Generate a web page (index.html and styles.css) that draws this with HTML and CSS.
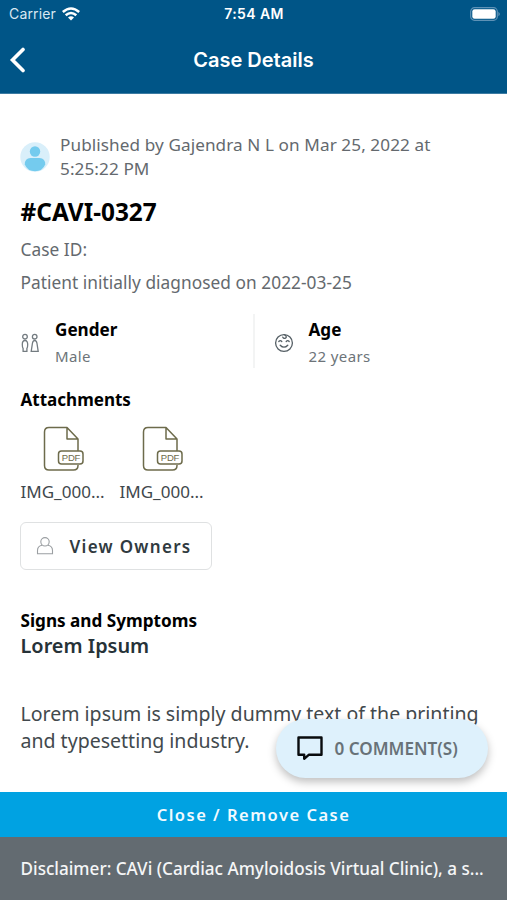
FILE: index.html
```html
<!DOCTYPE html>
<html lang="en">
<head>
<meta charset="utf-8">
<title>Case Details</title>
<link rel="stylesheet" href="styles.css">
</head>
<body>
<div class="screen">
  <header class="header">
    <div class="status">
      <div class="carrier"><span>Carrier</span>
        <svg width="18" height="14" viewBox="0 0 18 14" fill="none" stroke="#fff" stroke-width="2.600"><path d="M.8 5Q9-2 17.200 5M3.700 8.300Q9 3.700 14.300 8.300"/><path d="M9 13.500L6 10.400Q9 8 12 10.400Z" fill="#fff" stroke="none"/></svg>
      </div>
      <div class="time">7:54 AM</div>
      <svg class="battery" width="31" height="14" viewBox="0 0 31 14"><rect x=".7" y=".7" width="26.600" height="12.600" rx="3.800" fill="none" stroke="#5e92b6" stroke-width="1.200"/><rect x="2.300" y="2.300" width="23.400" height="9.400" rx="2.300" fill="#fff"/><path d="M28.500 4.700q2.400 2.300 0 4.600z" fill="#7aa5c4"/></svg>
    </div>
    <div class="nav">
      <svg class="back" width="16" height="26" viewBox="0 0 16 26" fill="none" stroke="#fff" stroke-width="3.600" stroke-linecap="round" stroke-linejoin="miter"><path d="M14 2.500L3.500 13L14 23.500"/></svg>
      <h1 class="title">Case Details</h1>
    </div>
  </header>
  <main class="content">
    <div class="published">
      <svg class="avatar" width="30" height="30" viewBox="0 0 30 30"><circle cx="15" cy="15" r="14.700" fill="#d9effa"/><circle cx="15" cy="9.500" r="5.200" fill="#74cbee"/><path d="M4.800 22.500Q4.800 16 10.500 16H19.500Q25.200 16 25.200 22.500Q22.500 29.300 15 29.300T4.800 22.500Z" fill="#74cbee"/></svg>
      <p class="published-text">Published by Gajendra N L on Mar 25, 2022 at 5:25:22 PM</p>
    </div>
    <h2 class="case-no">#CAVI-0327</h2>
    <p class="meta">Case ID:</p>
    <p class="meta diagnosed">Patient initially diagnosed on 2022-03-25</p>
    <div class="facts">
      <div class="fact">
        <svg width="20" height="20" viewBox="0 0 20 20" fill="none" stroke="#737b80" stroke-width="1.300"><circle cx="4" cy="3.700" r="2.300"/><circle cx="13.700" cy="3.700" r="2.300"/><path d="M4 7.500C2.200 7.500 1.300 9 1.300 11.500C1.300 14 1.700 15 2.100 15.500V18.300H5.900V15.500C6.300 15 6.700 14 6.700 11.500C6.700 9 5.800 7.500 4 7.500ZM13.700 7.500C12.300 7.500 11.700 8.500 11.400 10.500L10.200 18.300H17.200L16 10.500C15.700 8.500 15.100 7.500 13.700 7.500Z"/></svg>
        <div><h3 class="fact-name">Gender</h3><p class="fact-value">Male</p></div>
      </div>
      <div class="fact age">
        <svg width="20" height="20" viewBox="0 0 20 20" fill="none" stroke="#555f65" stroke-width="1.300" stroke-linecap="round"><circle cx="10" cy="10" r="8.400"/><path d="M10.500 1.800Q13.500 3.800 11.500 5.200Q9.500 5.800 8.800 4.200M4.800 8.500Q6.300 6.700 7.800 8.500M12.200 8.500Q13.700 6.700 15.200 8.500M6.200 12.200Q10 16.200 13.800 12.200"/></svg>
        <div><h3 class="fact-name">Age</h3><p class="fact-value">22 years</p></div>
      </div>
    </div>
    <h3 class="section">Attachments</h3>
    <div class="files">
      <div class="file">
        <svg width="42" height="46" viewBox="0 0 42 46" fill="none" stroke="#6d6b4b" stroke-width="1.500" stroke-linejoin="round"><path d="M35 39V39.500Q35 44 30.500 44H6Q1.500 44 1.500 39.500V6Q1.500 1.500 6 1.500H24L35 13V25M24 1.500V13H35"/><rect x="15.500" y="25" width="24.500" height="13" rx="3"/><text class="pdf" x="27.900" y="34.700" text-anchor="middle">PDF</text></svg>
        <p class="file-name">IMG_000...</p>
      </div>
      <div class="file">
        <svg width="42" height="46" viewBox="0 0 42 46" fill="none" stroke="#6d6b4b" stroke-width="1.500" stroke-linejoin="round"><path d="M35 39V39.500Q35 44 30.500 44H6Q1.500 44 1.500 39.500V6Q1.500 1.500 6 1.500H24L35 13V25M24 1.500V13H35"/><rect x="15.500" y="25" width="24.500" height="13" rx="3"/><text class="pdf" x="27.900" y="34.700" text-anchor="middle">PDF</text></svg>
        <p class="file-name">IMG_000...</p>
      </div>
    </div>
    <button class="owners">
      <svg width="18" height="20" viewBox="0 0 18 20" fill="none" stroke="#9b9fa2" stroke-width="1.100"><circle cx="9" cy="5.800" r="4.200"/><path d="M6 9.200Q1.500 10 1.500 14.500V17.700H16.500V14.500Q16.500 10 12 9.200"/></svg>
      <span>View Owners</span>
    </button>
    <h3 class="section signs">Signs and Symptoms</h3>
    <h4 class="subject">Lorem Ipsum</h4>
    <p class="description">Lorem ipsum is simply dummy text of the printing and typesetting industry.</p>
  </main>
  <button class="comments">
    <svg width="26" height="25" viewBox="0 0 26 25" fill="none" stroke="#080b0d" stroke-width="2.400" stroke-linejoin="round"><path d="M1.500 1.500H24.500V18.700H12L7.200 22.800V18.700H1.500Z"/></svg>
    <span>0 COMMENT(S)</span>
  </button>
  <footer class="footer">
    <button class="close">Close / Remove Case</button>
    <p class="disclaimer">Disclaimer: CAVi (Cardiac Amyloidosis Virtual Clinic), a s...</p>
  </footer>
</div>
</body>
</html>
```
FILE: styles.css
```css
* { box-sizing: border-box; }
body, h1, h2, h3, h4, p { margin: 0; }
body { font-family: "Noto Sans", sans-serif; background: #fff; color: #000; }
button { font: inherit; border: 0; padding: 0; }
svg { display: block; flex: none; }
.screen { position: relative; display: flex; flex-direction: column; width: 507px; height: 900px; overflow: hidden; }
.header { height: 94px; flex: none; background: #005587; border-bottom: 1px solid #3c7ba2; color: #fff; font-family: Inter, sans-serif; }
.status { display: grid; grid-template-columns: 1fr auto 1fr; align-items: center; height: 27px; padding: 0 6px 0 9px; }
.carrier { display: flex; align-items: center; gap: 6px; font-size: 14px; letter-spacing: .15px; color: #d9e8f2; }
.time { font-size: 14px; font-weight: 600; letter-spacing: .4px; transform: translateX(-1px); }
.battery { justify-self: end; }
.nav { display: grid; grid-template-columns: 40px 1fr 40px; align-items: center; height: 66px; }
.back { margin-left: 9px; }
.title { text-align: center; font-size: 20px; line-height: 24px; font-weight: 600; }
.content { flex: 1; min-height: 0; padding: 39px 21px 0 20.500px; }
.published { display: flex; align-items: center; gap: 10px; margin-left: -.500px; color: #64696e; }
.published-text { width: 400px; font-size: 17.150px; line-height: 24px; letter-spacing: .09px; }
.case-no { margin-top: 15px; font-size: 24.400px; line-height: 32px; font-weight: 700; }
.meta { margin-top: 9px; font-size: 17.300px; line-height: 24px; letter-spacing: .04px; color: #64696e; }
.case-no + .meta { margin-top: 10px; }
.facts { display: grid; grid-template-columns: 232.500px 1fr; margin-top: 19px; height: 54px; }
.fact { display: flex; align-items: center; gap: 14.500px; padding-top: 3px; }
.age { border-left: 2px solid #f3f4f4; padding-left: 19px; }
.fact-name { font-size: 17.100px; line-height: 24px; }
.fact-value { margin-top: 2px; font-size: 15px; line-height: 24px; letter-spacing: .4px; color: #6d7479; }
.section { font-size: 17.050px; line-height: 24px; }
.facts + .section { margin-top: 20px; }
.files { display: flex; gap: 15px; margin-top: 14px; }
.file { width: 84px; }
.file svg { margin-left: 22px; }
.pdf { font: 9.500px "Liberation Sans", sans-serif; letter-spacing: -.3px; fill: #6d6b4b; stroke: none; }
.file-name { margin-top: 8px; font-size: 17.050px; line-height: 24px; white-space: nowrap; color: #3f484d; }
.owners { display: flex; align-items: center; gap: 15.500px; width: 192px; height: 48px; margin-top: 18px; margin-left: -.500px; padding-left: 15px; border: 1px solid #dfe1e2; border-radius: 6px; background: #fff; color: #303a40; font-size: 17px; font-weight: 600; letter-spacing: 1.300px; white-space: nowrap; }
.signs { margin-top: 39px; font-size: 17.150px; }
.subject { font-size: 19.900px; line-height: 26px; font-weight: 600; color: #263238; }
.description { margin-top: 42px; font-size: 19.550px; line-height: 26.500px; color: #42494d; margin-right: -10px; }
.comments { position: absolute; left: 276px; top: 719px; display: flex; align-items: center; gap: 11.500px; width: 212px; height: 59px; padding-left: 21px; border-radius: 30px; background: #def1fc; box-shadow: 0 4px 8px rgba(0,0,0,.25); color: #687278; font-size: 17.100px; font-weight: 600; white-space: nowrap; }
.footer { flex: none; }
.close { display: block; width: 100%; height: 45px; background: #00a2e2; color: #f1faff; font-size: 16.500px; font-weight: 600; letter-spacing: 1.500px; }
.disclaimer { height: 63px; padding-left: 20.500px; background: #636b71; color: #f5f6f7; font-size: 17.130px; line-height: 63px; font-weight: 500; white-space: nowrap; }
```
